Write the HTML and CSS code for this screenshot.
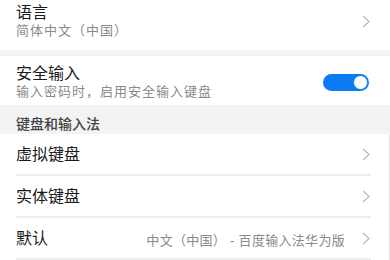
FILE: index.html
```html
<!DOCTYPE html>
<html lang="zh-CN">
  <head>
    <meta charset="UTF-8">
    <meta name="viewport" content="width=device-width, initial-scale=1.0">
    <title>语言和输入法</title>
    <link rel="stylesheet" href="styles.css">
  </head>
  <body>
    <div class="group">
      <div class="row row-first">
        <div class="text">
          <div class="title">语言</div>
          <div class="sub">简体中文（中国）</div>
        </div>
        <svg class="chevron" viewBox="0 0 8 13" width="8" height="13"><path d="M1 1 L7 6.5 L1 12" /></svg>
      </div>
    </div>

    <div class="group group-gap">
      <div class="row row-two">
        <div class="text">
          <div class="title">安全输入</div>
          <div class="sub">输入密码时，启用安全输入键盘</div>
        </div>
        <div class="switch on"><span class="knob"></span></div>
      </div>
    </div>

    <div class="section-title">键盘和输入法</div>

    <div class="group list">
      <div class="item">
        <div class="title">虚拟键盘</div>
        <svg class="chevron" viewBox="0 0 8 13" width="8" height="13"><path d="M1 1 L7 6.5 L1 12" /></svg>
      </div>
      <div class="item">
        <div class="title">实体键盘</div>
        <svg class="chevron" viewBox="0 0 8 13" width="8" height="13"><path d="M1 1 L7 6.5 L1 12" /></svg>
      </div>
      <div class="item">
        <div class="title">默认</div>
        <div class="value">中文（中国） - 百度输入法华为版</div>
        <svg class="chevron" viewBox="0 0 8 13" width="8" height="13"><path d="M1 1 L7 6.5 L1 12" /></svg>
      </div>
    </div>
  </body>
</html>
```

FILE: styles.css
```css
:root {
  --background: #f3f3f3;
  --card: #fff;
  --foreground: #1a1a1a;
  --muted: #8a8a8a;
  --divider: #ececec;
  --chevron: #b8b8b8;
  --primary: #0b7af5;
}

body {
  margin: 0;
  background-color: var(--background);
  font-family: "Liberation Sans", "Noto Sans CJK SC", sans-serif;
  color: var(--foreground);
}

.group {
  background-color: var(--card);
}

.group-gap {
  margin-top: 6px;
}

.row {
  display: flex;
  align-items: center;
  padding: 8px 20px 5px 16px;
}

.row-first {
  padding-top: 3px;
  padding-bottom: 11px;
}

.text {
  flex: 1;
}

.title {
  font-size: 16px;
  line-height: 20px;
}

.sub {
  font-size: 13px;
  line-height: 16px;
  letter-spacing: 1px;
  color: var(--muted);
}

.chevron {
  display: block;
  flex: none;
}

.chevron path {
  fill: none;
  stroke: var(--chevron);
  stroke-width: 1.2;
}

.switch {
  width: 46px;
  height: 17px;
  border-radius: 9px;
  background-color: var(--primary);
  position: relative;
  margin-right: 1px;
  flex: none;
}

.switch .knob {
  position: absolute;
  top: 1px;
  right: 1px;
  width: 13px;
  height: 13px;
  border-radius: 50%;
  background-color: #fff;
  border: 1px solid var(--primary);
}

.section-title {
  font-size: 14px;
  font-weight: 500;
  color: #444;
  line-height: 20px;
  padding: 9px 16px 0;
}

.item {
  display: flex;
  align-items: center;
  height: 40px;
  margin: 0 18px 0 16px;
  padding-right: 1px;
  border-bottom: 2px solid var(--divider);
}

.item .title {
  flex: 1;
  padding-top: 2px;
}

.value {
  font-size: 13px;
  letter-spacing: 0.3px;
  color: var(--muted);
  margin-right: 17px;
  padding-top: 2px;
}

.list {
  border-right: 1px solid #e6e6e6;
}
```
